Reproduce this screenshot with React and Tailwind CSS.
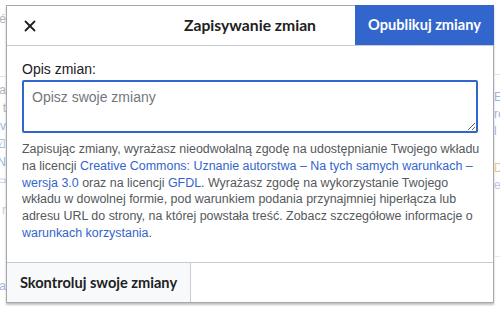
import { X } from 'lucide-react';

// faded page content peeking out on both sides of the dialog
const PageStrip = ({ side }) => {
  if (side === 'left') {
    return (
      <div className="w-[6px] overflow-hidden flex flex-col items-end text-[12px] leading-[18px] text-[#b0b4b8] pt-[10px]">
        <span>é</span>
        <div className="w-full mt-[48px] border-t border-[#dfe3ea]" />
        <span className="mt-[4px]">a</span>
        <span>t</span>
        <span className="text-[#9fb4e0]">v</span>
        <span className="text-[#9fb4e0]">☑</span>
        <span className="text-[#9fb4e0]">N</span>
        <span className="text-[#9fb4e0]">▭</span>
        <span className="mt-[12px] text-[#c8ccd0]">r</span>
        <span className="mt-[58px] text-[#9fb4e0]">a</span>
      </div>
    );
  }
  return (
    <div className="w-[6px] overflow-hidden flex flex-col text-[12px] leading-[17px] text-[#9fb4e0] pt-[74px]">
      <div className="w-[20px] border-t border-[#dfe3ea]" />
      <span className="mt-[14px]">E</span>
      <span>re</span>
      <span>l</span>
      <span className="mt-[20px] text-[#e8c890]">D</span>
      <span className="text-[#c4bde8]">e</span>
      <div className="w-[20px] mt-[62px] border-t border-[#e3eaf5]" />
    </div>
  );
};

const App = () => {
  return (
    <div className="w-[500px] h-[309px] overflow-hidden bg-white flex font-['Liberation_Sans',Arial,sans-serif]">
      <PageStrip side="left" />

      <div className="mt-[5px] w-[488px] h-[298px] flex flex-col bg-white border border-[#a2a9b1] shadow-[0_2px_2px_0_rgba(0,0,0,0.25)]">
        <header className="grid grid-cols-[1fr_auto_1fr] items-center h-[40px] border-b border-[#c8ccd1]">
          <div className="flex">
            <button className="w-[46px] h-[40px] flex items-center justify-center text-[#202122]">
              <X className="w-[18px] h-[18px]" strokeWidth={2.4} />
            </button>
          </div>
          <h1 className="font-['Lato',sans-serif] font-bold text-[15.7px] text-[#202122]">Zapisywanie zmian</h1>
          <div className="flex justify-end h-full">
            <button className="w-[139px] h-[40px] -mr-px -mt-px bg-[#3366cc] text-white font-['Lato',sans-serif] font-bold text-[14.6px]">
              Opublikuj zmiany
            </button>
          </div>
        </header>

        <div className="flex-1 px-[15px] pt-[14px]">
          <label className="block text-[14px] leading-[18px] text-[#202122]">Opis zmian:</label>
          <textarea
            placeholder="Opisz swoje zmiany"
            className="block mt-[2px] w-full h-[53px] px-[8px] py-[5px] text-[14px] text-[#202122] placeholder:text-[#72777d] border-2 border-[#3366cc] rounded-[2px] outline-none"
          />
          <p className="mt-[8px] whitespace-nowrap text-[12.45px] leading-[16.8px] text-[#54595d]">
            Zapisując zmiany, wyrażasz nieodwołalną zgodę na udostępnianie Twojego wkładu
            <br />
            na licencji <a className="text-[#3366cc]">Creative Commons: Uznanie autorstwa – Na tych samych warunkach –</a>
            <br />
            <a className="text-[#3366cc]">wersja 3.0</a> oraz na licencji <a className="text-[#3366cc]">GFDL</a>. Wyrażasz
            zgodę na wykorzystanie Twojego
            <br />
            wkładu w dowolnej formie, pod warunkiem podania przynajmniej hiperłącza lub
            <br />
            adresu URL do strony, na której powstała treść. Zobacz szczegółowe informacje o
            <br />
            <a className="text-[#3366cc]">warunkach korzystania</a>.
          </p>
        </div>

        <footer className="flex h-[40px] border-t border-[#c8ccd1]">
          <button className="w-[184px] bg-[#f8f9fa] border-r border-[#c8ccd1] font-['Lato',sans-serif] font-bold text-[14.6px] text-[#202122]">
            Skontroluj swoje zmiany
          </button>
        </footer>
      </div>

      <PageStrip side="right" />
    </div>
  );
};

export default App;
